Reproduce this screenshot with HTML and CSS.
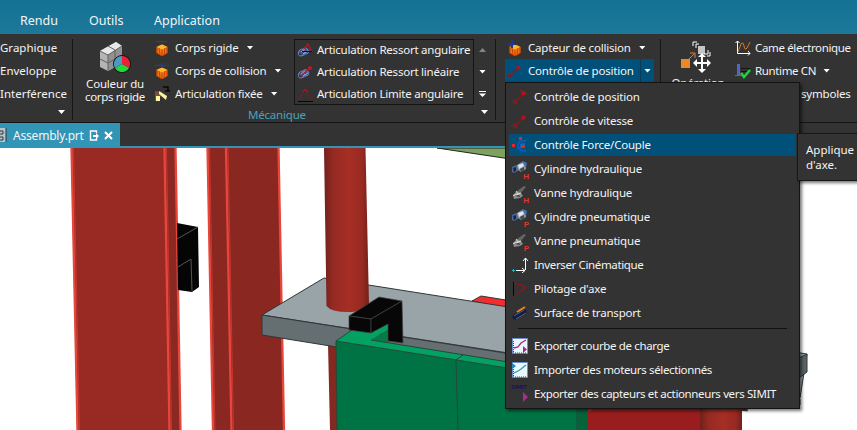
FILE: index.html
```html
<!DOCTYPE html>
<html lang="fr">
<head>
<meta charset="utf-8">
<title>Assembly.prt</title>
<link rel="stylesheet" href="styles.css">
</head>
<body>
<svg class="defs" width="0" height="0">
  <defs>
    <symbol id="cube" viewBox="0 0 16 16"><path d="M2.500 7 8 4.500l5.500 2.500v6L8 16l-5.500-3z" fill="#f47a10"/><path d="M2.500 7 8 4.500 13.500 7 8 9.500z" fill="#ffb52e"/><path d="M3 7v6l5 3 5-3V7M8 9.500V15M5 8l1 6M11 8l-1 6" stroke="#c33b05" fill="none"/></symbol>
    <symbol id="rod" viewBox="0 0 16 16"><path d="M3 13 12 4" stroke="#8f151c" stroke-width="1.500"/><circle cx="3" cy="13" r="1.800" fill="#343434" stroke="#a6161f"/><path d="m9 4 3-2 2 3-3 2z" fill="#b6121c"/></symbol>
    <symbol id="cyl" viewBox="0 0 16 16"><path d="m0 6 4-2 2 1v5l-4 2-2-1z" fill="#49699c"/><path d="m1 7 3-1v4l-2 1z" fill="#1d2638"/><path d="m5 4 5-3 4 1v6l-5 3-3-2z" fill="#8b929b"/><path d="m8 2 3-2 4 2-1 5-2-3z" fill="#4573ad"/><path d="m6 4 5-2 1 3-5 3z" fill="#e1e4e6"/><path d="m8 8 4-2v3l-3 2z" fill="#414950"/></symbol>
    <symbol id="valve" viewBox="0 0 16 16"><path d="m5 6 7-5 2 1-6 7z" fill="#646464"/><path d="m1 10 4-4 4 2 2 3-3 2-6 1z" fill="#8b8b8b"/><path d="m1 11 3-2 3 1M4 6l2 3 3-1" stroke="#ddd" fill="none"/><path d="m4 11 3-1 1 2z" fill="#292929"/></symbol>
    <symbol id="spring" viewBox="0 0 16 16"><path d="m1 9 7-5 5 3-6 6z" fill="#42578d"/><path d="M2 8q3-4 5 0t-3 5q-4 0-2-5M6 6q3-3 5 1t-3 4" fill="none" stroke="#6b86cc"/><path d="m4 9 4-3M6 11l5-3" stroke="#92a3d2"/></symbol>
    <symbol id="chart" viewBox="0 0 16 16"><path d="M.5.5h15v15H.5z" fill="#eaf7fc" stroke="#6f8cd0"/><path d="M1 15h14" stroke="#283eac" stroke-dasharray="1 1"/><path d="M1.500 3v12" stroke="#283eac" stroke-dasharray="1 1"/></symbol>
  </defs>
</svg>
<nav class="menubar"><span class="m-rendu">Rendu</span><span class="m-outils">Outils</span><span>Application</span></nav>
<header class="ribbon">
  <section class="group display">
    <div class="cell"><span class="t">Graphique</span></div><div class="cell"><span class="t">Enveloppe</span></div><div class="cell"><span class="t">Interférence</span></div>
    <i class="caret launcher"></i>
  </section>
  <section class="group mechanics">
    <div class="tools">
      <div class="big">
        <svg width="33" height="33" viewBox="0 0 33 33"><path d="M1 10 17 1l6 4v17L9 30l-8-4z" fill="#b4b4b4"/><path d="M1 10 17 1l6 4L9 14z" fill="#e8e8e8"/><path d="m9 14 14-9v17L9 30z" fill="#929292"/><path d="m1 10 8 4v16M1 18l8 4 14-8M9 14l14-9M9 5l7 4v17" fill="none" stroke="#606060"/><circle cx="23" cy="23" r="9" fill="#111"/><path d="M23 23v-8a8 8 0 0 1 7 12z" fill="#ee2037"/><path d="m23 23 7 4a8 8 0 0 1-14 0z" fill="#25d63d"/><path d="m23 23-7 4a8 8 0 0 1 7-12z" fill="#4d9ac1"/></svg>
        <span class="t">Couleur du</span><span class="t tight">corps rigide</span>
      </div>
      <div class="bodies">
        <div class="cell"><svg class="ic" viewBox="0 0 16 16"><use href="#cube"/><path d="M2 1.500h11" stroke="#283e92"/></svg><span class="t">Corps rigide</span><i class="caret"></i></div>
        <div class="cell"><svg class="ic" viewBox="0 0 16 16"><use href="#cube"/><path d="M1 2.500h14M8 0v5M5 0l3 4 3-4" stroke="#243c95" fill="none"/></svg><span class="t">Corps de collision</span><i class="caret"></i></div>
        <div class="cell"><svg class="ic" viewBox="0 0 16 16"><path d="m1 5 7 1-3 9H1z" fill="#7e4e3c"/><path d="m5 5 8 5-1 4-7-6z" fill="#f7f1a4"/><path d="M2 10h4v5H2z" fill="#fff6a3"/><path d="M9 1h5v4M11 5h5" stroke="#080808" stroke-width="1.500" fill="none"/></svg><span class="t">Articulation fixée</span><i class="caret"></i></div>
      </div>
      <div class="gallery">
        <div class="cell"><svg class="ic" viewBox="0 0 16 16"><use href="#spring"/><path d="m7 6 4-5 4 8" stroke="#af1922" stroke-width="1.500" fill="none"/><path d="M5 8.500h10" stroke="#101010"/></svg><span class="t">Articulation Ressort angulaire</span></div>
        <div class="cell"><svg class="ic" viewBox="0 0 16 16"><use href="#spring"/><path d="m4 11 9-8" stroke="#bd1d28" stroke-width="1.500"/><circle cx="13" cy="3" r="2" fill="#c41924"/></svg><span class="t">Articulation Ressort linéaire</span></div>
        <div class="cell"><svg class="ic" viewBox="0 0 16 16"><path d="M2 13 8 2l6 11" stroke="#8b171c" fill="none"/><path d="m6 5 2-3 3 3" stroke="#b9161d" fill="none"/><path d="M1 14.500h15" stroke="#080808"/></svg><span class="t">Articulation Limite angulaire</span></div>
      </div>
      <div class="scroll"><i class="caret up"></i><i class="caret"></i><i class="more"></i></div>
    </div>
    <div class="caption"><span class="t">Mécanique</span><i class="caret"></i></div>
  </section>
  <section class="group electric">
    <div class="cell sensor"><svg class="ic" viewBox="0 0 16 16"><use href="#cube"/><path d="M5 0v8M1 4h8" stroke="#1f3695" stroke-width="2"/></svg><span class="t">Capteur de collision</span><i class="caret"></i></div>
    <div class="cell active"><svg class="ic" viewBox="0 0 16 16"><use href="#rod"/></svg><span class="t">Contrôle de position</span><span class="split"><i class="caret"></i></span></div>
  </section>
  <section class="group automation">
    <div class="operation">
      <svg width="32" height="33" viewBox="0 0 32 33"><path d="M1 18h9v9H1z" fill="#ef862a"/><path d="m8 19 6-6M10 12h5v5" stroke="#e78127" fill="none"/><path d="M18 5h7v8h-7z" fill="#c5c5c5"/><path d="M13 5V1h4M16 7V3h3M28 9v4h-4M30 11v4h-3" stroke="#fff" fill="none"/><path d="M22 14v16M14 22h16" stroke="#fff" stroke-width="2"/><path d="m22 12-4 4h8zM22 32l-4-4h8zM13 22l4-4v8zM31 22l-4-4v8z" fill="#fff"/></svg>
      <span class="t">Opération</span>
    </div>
    <div class="cams">
      <div class="cell"><svg class="ic" viewBox="0 0 16 16"><path d="M2.500 1v12.500H15M.5 3l2-2 2 2M13 11l2 2.500-2 2" stroke="#fff" fill="none"/><path d="M3 12 6 4q2-3 3 2 1 5 3 2l3-6" stroke="#d87924" fill="none"/></svg><span class="t tight">Came électronique</span></div>
      <div class="cell"><svg class="ic" viewBox="0 0 16 16"><path d="M3.500 1v12" stroke="#5265c0" stroke-width="3"/><path d="M0 12.500h6" stroke="#5265c0"/><path d="M6 5.500h9M6 8.500h6" stroke="#151515"/><path d="m6 10 3 4 6-7" stroke="#20d33c" stroke-width="2.500" fill="none"/></svg><span class="t tight">Runtime CN</span><i class="caret"></i></div>
      <div class="cell symbols"><span class="t">symboles</span></div>
    </div>
  </section>
</header>
<div class="tabs"><div class="tab"><svg width="7" height="16" viewBox="0 0 7 16"><path d="M0 1h6v14H0" fill="#b9c4ca"/><path d="M0 4h3v3H0m0 3h3v3H0M6 1v14" stroke="#253840" fill="none"/></svg><span class="t">Assembly.prt</span><svg class="page" width="10" height="11" viewBox="0 0 10 11"><path d="M7.500 3V1h-6v9h6V8" stroke="#fff" stroke-width="1.400" fill="none"/><path d="M4 7V5h3V3l3 3-3 3V7z" fill="#fff"/></svg><svg width="9" height="9" viewBox="0 0 9 9"><path d="m1 1 7 7m0-7L1 8" stroke="#fff" stroke-width="2"/></svg></div></div>
<main>
<svg class="scene" viewBox="0 148 857 282" width="857" height="282">
  <defs><linearGradient id="tube"><stop offset="0" stop-color="#71201b"/><stop offset=".2" stop-color="#942a22"/><stop offset=".55" stop-color="#a62e25"/><stop offset=".85" stop-color="#982a22"/><stop offset="1" stop-color="#712019"/></linearGradient></defs>
  <path d="M71 148h104l6 282H77z" fill="#982923"/><path d="M164 148h11l6 282h-12z" fill="#8b2822"/>
  <path d="M207 148h72l5 282h-71z" fill="#8b2721"/>
  <path d="m71.500 148 6 282M164.500 148l5 282M175.500 148l5 282M207.500 148l5.500 282M226 148l5.500 282M278.500 148l5.500 282" stroke="#e8463b" stroke-width="2.300"/>
  <path d="m73.500 148 6 282M166.500 148l5 282M209.500 148l5.500 282M228 148l5.500 282" stroke="#c43731" stroke-width="1"/>
  <path d="m177 223 21 4 1 60-7 5-14-2z" fill="#050505"/><path d="m177 239 21-12M178 267l13-8 1 32" stroke="#555" fill="none"/>
  <path d="M437 148h70v10.500z" fill="#7da25f" stroke="#222"/>
  <path d="M328 344h10v86h-8z" fill="#852820"/>
  <g stroke="#303638" stroke-width="1"><path d="m472 301 9-5 50 8v10z" fill="#f52c2d"/><path d="m262 315 62-37 483 76-7 44z" fill="#98a4a8"/><path d="m262 315 243 38 295 46v20l-295-45-243-39z" fill="#656f71"/><path d="m799 358 8-4v18l-8 6z" fill="#596467"/></g>
  <path d="M324 148h41.500l3.500 157q-4 7-21 7t-21.500-6z" fill="url(#tube)"/>
  <path d="M750 405h107v25H740z" fill="#fff"/><path d="M715 404h37l-7 7-30-7" fill="#353b3d"/>
  <path d="m336 341 241 38v51H337z" fill="#007344"/><path d="m577 379 11 2v49h-11z" fill="#046339"/>
  <path d="m336 341 14-10h21l17-8v6l-17 11 206 33v6z" fill="#03a263"/><path d="m371 340 17-11v14z" fill="#087a4a"/>
  <path d="m352 330-16 11 241 38M336 341l1 89M371 340l206 33M456 360l2 70M456 360l7-5M577 379v51" stroke="#24483a" fill="none"/>
  <path d="M588 406h112v24H588z" fill="#991d1e"/><path d="M700 406h42v24h-42z" fill="url(#tube)"/><path d="M588 412V400l13 5z" fill="#ba2b2c"/>
  <g fill="#070707" stroke="#444" stroke-width=".7"><path d="m349 316 30-19 23 4-31 18z"/><path d="m349 316 22 3v14l-22-3z"/><path d="m371 319 31-18 1 42-15-2v-17l-17 9z"/></g>
</svg>
</main>
<aside class="dropdown">
  <div class="item"><svg class="ic" viewBox="0 0 16 16"><use href="#rod"/><path d="m8 1 7 4" stroke="#b6121c"/></svg><span class="t">Contrôle de position</span></div>
  <div class="item"><svg class="ic" viewBox="0 0 16 16"><use href="#rod"/></svg><span class="t">Contrôle de vitesse</span></div>
  <div class="item hover"><svg class="ic" viewBox="0 0 16 16"><path d="M14 4q-8-1-8 5 1 5 8 5" stroke="#1557c1" stroke-width="1.800" fill="none"/><path d="M13 7H9v4" stroke="#297bdc" fill="none"/><path d="M0 7h3v3H0zM7 0h3v3H7zM9 8h4v3H9z" fill="#dc2830"/></svg><span class="t">Contrôle Force/Couple</span></div>
  <div class="item"><span class="mark"><svg class="ic" viewBox="0 0 16 16"><use href="#cyl"/></svg><b>H</b></span><span class="t">Cylindre hydraulique</span></div>
  <div class="item"><span class="mark"><svg class="ic" viewBox="0 0 16 16"><use href="#valve"/></svg><b>H</b></span><span class="t">Vanne hydraulique</span></div>
  <div class="item"><span class="mark"><svg class="ic" viewBox="0 0 16 16"><use href="#cyl"/></svg><b>P</b></span><span class="t">Cylindre pneumatique</span></div>
  <div class="item"><span class="mark"><svg class="ic" viewBox="0 0 16 16"><use href="#valve"/></svg><b>P</b></span><span class="t">Vanne pneumatique</span></div>
  <div class="item"><svg class="ic" viewBox="0 0 16 16"><path d="M4 13.500h9M10 11l3 2.500-3 2.500M13.500 13V1M11 4l2.500-3L16 4" stroke="#fff" fill="none"/><path d="M0 13.500h3M1.500 12v3" stroke="#1bb4c5"/></svg><span class="t tight">Inverser Cinématique</span></div>
  <div class="item"><svg class="ic" viewBox="0 0 16 16"><path d="M1.500 1v14" stroke="#080808"/><path d="m2 2 12 4L3 14M8 3l6 3-4 4" stroke="#91151c" fill="none"/></svg><span class="t">Pilotage d'axe</span></div>
  <div class="item"><svg class="ic" viewBox="0 0 16 16"><path d="m3 12 9-5" stroke="#151c38" stroke-width="5" stroke-linecap="round"/><path d="m2 11 10-6M4 14l10-6" stroke="#4d629b"/><path d="m5 7 8-5" stroke="#ee851c" stroke-width="2"/></svg><span class="t">Surface de transport</span></div>
  <div class="rule"></div>
  <div class="item"><svg class="ic" viewBox="0 0 16 16"><use href="#chart"/><path d="m2 10 4-1 3-4 5-3" stroke="#ae248f" fill="none" stroke-width="1.300"/><path d="m11 8 4 3.500-4 3.500z" fill="#ae248f"/></svg><span class="t tight">Exporter courbe de charge</span></div>
  <div class="item"><svg class="ic" viewBox="0 0 16 16"><use href="#chart"/><path d="m2 11 4-2 3-2 5-4" stroke="#27a0a2" fill="none" stroke-width="1.300"/><path d="m0 1 4 3-4 3z" fill="#2387bb"/></svg><span class="t tight">Importer des moteurs sélectionnés</span></div>
  <div class="item"><span class="mark simit"><svg class="ic" viewBox="0 0 16 16"><path d="m11 6 5 5-5 5z" fill="#a82e8e"/></svg><em>SIMIT</em></span><span class="t tight">Exporter des capteurs et actionneurs vers SIMIT</span></div>
</aside>
<div class="tip">Applique<br>d'axe.</div>
</body>
</html>
```

FILE: styles.css
```css
* { box-sizing: border-box; }
body { margin: 0; width: 857px; height: 430px; overflow: hidden; position: relative; background: #fff; color: #f4f4f4; font: 11.5px/13px "Noto Sans", "Open Sans", sans-serif; }
svg { display: block; flex: none; }
.defs { position: absolute; }
.t { white-space: nowrap; flex: none; letter-spacing: -.2px; }
.tight { letter-spacing: -.36px; }
.menubar { height: 34px; padding: 6px 0 0 20px; display: flex; align-items: center; background: linear-gradient(#147294, #1d789a); font-size: 12.5px; }
.m-rendu { width: 69px; }
.m-outils { width: 65px; }
.ribbon { display: grid; grid-template-columns: 73px 423px 165px 196px; height: 89px; padding-top: 3px; background: #333; border-bottom: 1px solid #151515; overflow: hidden; }
.group { height: 81px; margin-top: 2px; border-right: 1px solid #161616; min-width: 0; }
.cell { display: flex; align-items: center; height: 23px; gap: 5px; }
.ic { width: 16px; height: 16px; }
.caret { flex: none; width: 7px; height: 4px; background: #fff; clip-path: polygon(0 0, 100% 0, 50% 100%); }
.cell .caret { margin-left: 3px; }
.launcher { display: block; margin: 5px 0 0 58px; }
.display .t { letter-spacing: 0; }
.display .cell:first-child, .bodies .cell:first-child, .sensor, .cams .cell:first-child { height: 20px; padding-bottom: 3px; }
.automation { border-right: 0; display: flex; }
.tools { display: flex; height: 66px; }
.big { width: 84px; padding-top: 2px; display: flex; flex-direction: column; align-items: center; }
.big svg { margin-bottom: 3px; }
.bodies { width: 137px; }
.bodies .ic { margin-left: -3px; }
.gallery { width: 180px; height: 66px; border: 1px solid #141414; padding-left: 2px; }
.gallery .cell { height: 22px; gap: 4px; }
.gallery .t { margin-top: -4px; letter-spacing: -.23px; }
.scroll { width: 17px; display: flex; flex-direction: column; align-items: center; justify-content: space-between; padding: 9px 0 8px; }
.up { background: #858585; clip-path: polygon(50% 0, 100% 100%, 0 100%); }
.more { width: 7px; height: 6px; clip-path: polygon(0 0, 100% 0, 100% 17%, 0 17%, 0 40%, 100% 40%, 50% 100%, 0 40%); background: #fff; }
.caption { display: flex; align-items: center; padding: 0 7px 4px 175px; height: 18px; color: #4ba1bb; justify-content: space-between; }
.caption .t { letter-spacing: -.2px; margin-top: 4px; }
.sensor { padding-left: 11px; }
.active { width: 149px; margin-left: 9px; padding-left: 2px; background: #00507a; }
.split { align-self: stretch; display: flex; align-items: center; width: 14px; border-left: 1px solid #073c58; margin-left: auto; }
.split .caret { margin-left: 3px; }
.operation { width: 72px; display: flex; flex-direction: column; align-items: center; padding: 2px 0 0 2px; }
.operation svg { margin: 0 4px 2px 0; }
.cams { padding-left: 2px; }
.cams .cell { gap: 4px; }
.symbols { padding-left: 66px; }
.tabs { height: 25px; background: #333; border-bottom: 2px solid #3594b5; }
.tab { width: 120px; height: 24px; background: #3295b6; display: flex; align-items: center; }
.tab .t { width: 70px; margin-left: 6px; font-size: 12px; }
.page { margin: 0 5px 0 6px; }
main { height: 282px; }
.dropdown { position: absolute; left: 505px; top: 82px; width: 295px; height: 327px; padding: 3px; background: #333; border: 1px solid #141414; box-shadow: 2px 2px 3px #0008; }
.item { height: 22px; margin-bottom: 2px; padding-left: 3px; display: flex; align-items: center; gap: 6px; }
.item .t { margin-top: -2px; }
.item:nth-child(n+2):nth-child(-n+9) { position: static; }
.hover { background: #00507a; position: relative; }
.mark { position: relative; width: 16px; flex: none; }
.mark b { position: absolute; right: -1px; bottom: -4px; font: bold 8px/8px "Liberation Sans", sans-serif; color: #dc3830; }
.mark em { position: absolute; left: -1px; top: -2px; font: bold 5.5px/7px "DejaVu Sans", sans-serif; letter-spacing: -.3px; color: #21115f; }
.rule { height: 1px; margin: 4px 9px 6px; background: #111; }
.tip { position: absolute; left: 797px; top: 133px; width: 70px; height: 48px; padding: 8px; background: #333; border: 1px solid #171717; line-height: 15px; box-shadow: 2px 2px 3px #0008; }
```
